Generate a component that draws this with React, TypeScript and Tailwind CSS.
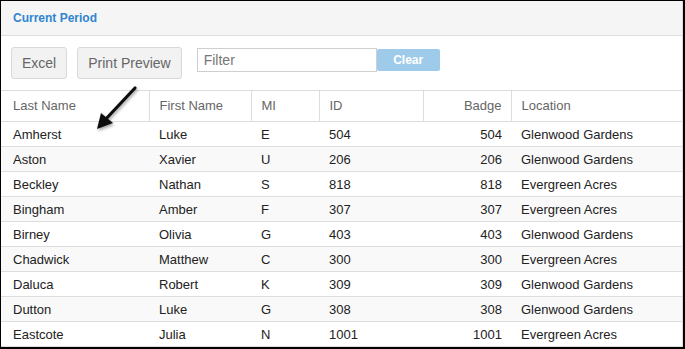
import React from "react";

const rows = [
  ["Amherst", "Luke", "E", "504", "504", "Glenwood Gardens"],
  ["Aston", "Xavier", "U", "206", "206", "Glenwood Gardens"],
  ["Beckley", "Nathan", "S", "818", "818", "Evergreen Acres"],
  ["Bingham", "Amber", "F", "307", "307", "Evergreen Acres"],
  ["Birney", "Olivia", "G", "403", "403", "Glenwood Gardens"],
  ["Chadwick", "Matthew", "C", "300", "300", "Evergreen Acres"],
  ["Daluca", "Robert", "K", "309", "309", "Glenwood Gardens"],
  ["Dutton", "Luke", "G", "308", "308", "Glenwood Gardens"],
  ["Eastcote", "Julia", "N", "1001", "1001", "Evergreen Acres"],
];

export default function App() {
  return (
    <div
      className="relative w-[685px] h-[349px] overflow-hidden bg-white border-t border-l border-r-2 border-b-2 border-black"
      style={{ fontFamily: '"Liberation Sans", Arial, sans-serif' }}
    >
      <div className="h-full border-r border-[#dcdcdc] flex flex-col">
        <div className="h-[35px] bg-[#f5f5f5] border-b border-[#dddddd] flex items-center pl-[12px]">
          <span className="text-[12px] font-bold text-[#2f86d0]">Current Period</span>
        </div>
        <div className="h-[54px] flex items-start pt-[11px] pl-[10px]">
          <button className="h-[32px] px-[10px] bg-[#f2f2f2] border border-[#d9d9d9] rounded-[3px] text-[14px] text-[#666]">
            Excel
          </button>
          <button className="ml-[10px] h-[32px] px-[10px] bg-[#f2f2f2] border border-[#d9d9d9] rounded-[3px] text-[14px] text-[#666]">
            Print Preview
          </button>
          <div className="ml-[15px] mt-[1px] flex">
            <div className="w-[180px] h-[24px] border border-[#cfcfcf] flex items-center pl-[6px] text-[14px] text-[#777]">
              Filter
            </div>
            <div className="w-[63px] h-[22px] mt-[1px] bg-[#9fcbeb] rounded-[2px] flex items-center justify-center text-[12px] font-bold text-white">
              Clear
            </div>
          </div>
        </div>
        <table className="w-full border-collapse text-[13px]" style={{ tableLayout: "fixed" }}>
          <colgroup>
            <col style={{ width: 148 }} />
            <col style={{ width: 102 }} />
            <col style={{ width: 68 }} />
            <col style={{ width: 104 }} />
            <col style={{ width: 88 }} />
            <col />
          </colgroup>
          <thead>
            <tr className="h-[31px] border-t border-b border-[#dddddd] text-[#666]">
              <th className="font-normal text-left pl-[12px]">Last Name</th>
              <th className="font-normal text-left pl-[10px] border-l border-[#dddddd]">First Name</th>
              <th className="font-normal text-left pl-[10px] border-l border-[#dddddd]">MI</th>
              <th className="font-normal text-left pl-[10px] border-l border-[#dddddd]">ID</th>
              <th className="font-normal text-right pr-[9px] border-l border-[#dddddd]">Badge</th>
              <th className="font-normal text-left pl-[10px] border-l border-[#dddddd]">Location</th>
            </tr>
          </thead>
          <tbody>
            {rows.map((r, i) => (
              <tr
                key={i}
                className={`h-[25px] border-b border-[#dddddd] text-[#222] ${i % 2 === 1 ? "bg-[#f9f9f9]" : "bg-white"}`}
              >
                <td className="pl-[12px] pt-[1px]">{r[0]}</td>
                <td className="pl-[10px] pt-[1px]">{r[1]}</td>
                <td className="pl-[10px] pt-[1px]">{r[2]}</td>
                <td className="pl-[10px] pt-[1px]">{r[3]}</td>
                <td className="text-right pr-[9px] pt-[1px]">{r[4]}</td>
                <td className="pl-[10px] pt-[1px]">{r[5]}</td>
              </tr>
            ))}
          </tbody>
        </table>
      </div>
      <svg className="absolute left-[88px] top-[82px]" width="56" height="56" viewBox="0 0 56 56">
        <defs>
          <filter id="sh" x="-50%" y="-50%" width="200%" height="200%">
            <feDropShadow dx="1" dy="2" stdDeviation="1.5" floodColor="#000" floodOpacity="0.35" />
          </filter>
        </defs>
        <g filter="url(#sh)">
          <line x1="46" y1="5" x2="15" y2="38" stroke="#111" strokeWidth="3.2" strokeLinecap="round" />
          <polygon points="8,46 12,30 24,40" fill="#111" />
        </g>
      </svg>
    </div>
  );
}
